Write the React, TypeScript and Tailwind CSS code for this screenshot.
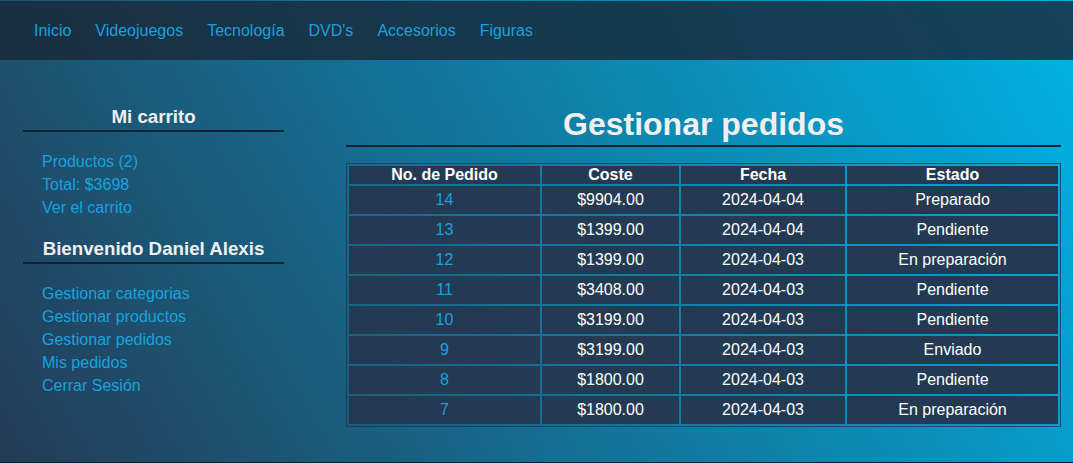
import React from "react";

const navLinks = ["Inicio", "Videojuegos", "Tecnología", "DVD's", "Accesorios", "Figuras"];

const rows: [string, string, string, string][] = [
  ["14", "$9904.00", "2024-04-04", "Preparado"],
  ["13", "$1399.00", "2024-04-04", "Pendiente"],
  ["12", "$1399.00", "2024-04-03", "En preparación"],
  ["11", "$3408.00", "2024-04-03", "Pendiente"],
  ["10", "$3199.00", "2024-04-03", "Pendiente"],
  ["9", "$3199.00", "2024-04-03", "Enviado"],
  ["8", "$1800.00", "2024-04-03", "Pendiente"],
  ["7", "$1800.00", "2024-04-03", "En preparación"],
];

export default function App() {
  return (
    <div className="h-[463px] bg-[#0e1c28] font-['Liberation_Sans',Arial,sans-serif]">
      <div className="h-[462px] overflow-hidden bg-[linear-gradient(60deg,#243b55,#00b4e6)]">
        <nav className="mt-px flex h-[59px] items-center bg-[rgba(25,39,55,0.8)] pl-[22px]">
          {navLinks.map((l) => (
            <a key={l} href="#" className="px-3 text-[16px] leading-[18px] text-[#17a2de]">
              {l}
            </a>
          ))}
        </nav>

        <div className="flex gap-[62px] pl-[23px] pr-[12px] pt-[46px]">
          <aside className="w-[261px] shrink-0">
            <h3 className="border-b-2 border-[#14222f] pb-[2px] text-center text-[18.72px] font-bold leading-[22px] text-[#f0f0f0]">
              Mi carrito
            </h3>
            <div className="mt-[18px] flex flex-col pl-[19px] text-[16px] leading-[23px] text-[#17a2de]">
              <a href="#">Productos (2)</a>
              <span>Total: $3698</span>
              <a href="#">Ver el carrito</a>
            </div>
            <h3 className="mt-[19px] border-b-2 border-[#14222f] pb-[2px] text-center text-[18.72px] font-bold leading-[22px] text-[#f0f0f0]">
              Bienvenido Daniel Alexis
            </h3>
            <div className="mt-[18px] flex flex-col pl-[19px] text-[16px] leading-[23px] text-[#17a2de]">
              <a href="#">Gestionar categorias</a>
              <a href="#">Gestionar productos</a>
              <a href="#">Gestionar pedidos</a>
              <a href="#">Mis pedidos</a>
              <a href="#">Cerrar Sesión</a>
            </div>
          </aside>

          <main className="flex-1">
            <h1 className="border-b-2 border-[#14222f] pb-[2px] text-center text-[32px] font-bold leading-[37px] text-[#f0f0f0]">
              Gestionar pedidos
            </h1>
            <table className="mt-[16px] w-full table-fixed border border-[rgba(30,52,74,0.75)] [border-collapse:separate] [border-spacing:2px] text-[16px] text-white">
              <thead>
                <tr>
                  <th className="w-[191px] bg-[#233a52] p-0 font-bold leading-[18px]">No. de Pedido</th>
                  <th className="w-[137px] bg-[#233a52] p-0 font-bold leading-[18px]">Coste</th>
                  <th className="w-[164px] bg-[#233a52] p-0 font-bold leading-[18px]">Fecha</th>
                  <th className="bg-[#233a52] p-0 font-bold leading-[18px]">Estado</th>
                </tr>
              </thead>
              <tbody>
                {rows.map((r) => (
                  <tr key={r[0]}>
                    <td className="bg-[#233a52] py-[5px] text-center leading-[18px] text-[#17a2de]">{r[0]}</td>
                    <td className="bg-[#233a52] py-[5px] text-center leading-[18px]">{r[1]}</td>
                    <td className="bg-[#233a52] py-[5px] text-center leading-[18px]">{r[2]}</td>
                    <td className="bg-[#233a52] py-[5px] text-center leading-[18px]">{r[3]}</td>
                  </tr>
                ))}
              </tbody>
            </table>
          </main>
        </div>
      </div>
    </div>
  );
}
